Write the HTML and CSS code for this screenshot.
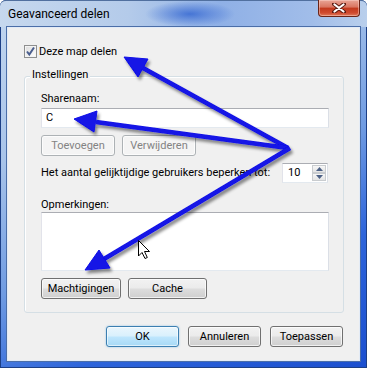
FILE: index.html
```html
<!DOCTYPE html>
<html lang="nl">
<head>
<meta charset="utf-8">
<title>Geavanceerd delen</title>
<link rel="stylesheet" href="styles.css">
</head>
<body>
<div class="window">
  <div class="titlebar">
    <span class="title">Geavanceerd delen</span>
    <span class="close"><svg width="14" height="10" viewBox="0 0 14 10"><path d="M2 1 L12 9 M12 1 L2 9" stroke="#5a1a10" stroke-width="4" stroke-linecap="round"/><path d="M2.5 1.5 L11.5 8.5 M11.5 1.5 L2.5 8.5" stroke="#fff" stroke-width="2.2" stroke-linecap="round"/></svg></span>
  </div>
  <div class="client">
    <div class="check-row">
      <span class="checkbox"><svg width="11" height="11" viewBox="0 0 11 11"><path d="M2 5.5 L4.3 8.5 L9 1.5" fill="none" stroke="#4a5e8e" stroke-width="2"/></svg></span>
      <span>Deze map delen</span>
    </div>
    <div class="group">
      <span class="legend">Instellingen</span>
      <span class="label first">Sharenaam:</span>
      <div class="textbox">C</div>
      <div class="btn-row">
        <button class="btn disabled w74">Toevoegen</button>
        <button class="btn disabled w74">Verwijderen</button>
      </div>
      <div class="limit-row">
        <span class="limit-text">Het aantal gelijktijdige gebruikers beperken tot:</span>
        <div class="spinner">
          <span class="spin-value">10</span>
          <span class="spin-buttons">
            <span class="spin-btn"><svg width="7" height="4" viewBox="0 0 7 4"><path d="M0 4 L3.5 0 L7 4 Z" fill="#4d6185"/></svg></span>
            <span class="spin-btn"><svg width="7" height="4" viewBox="0 0 7 4"><path d="M0 0 L3.5 4 L7 0 Z" fill="#4d6185"/></svg></span>
          </span>
        </div>
      </div>
      <span class="label second">Opmerkingen:</span>
      <div class="textarea"></div>
      <div class="btn-row">
        <button class="btn w80">Machtigingen</button>
        <button class="btn w79">Cache</button>
      </div>
    </div>
    <div class="footer">
      <button class="btn default w73">OK</button>
      <button class="btn w73">Annuleren</button>
      <button class="btn w73">Toepassen</button>
    </div>
  </div>
</div>
<svg class="overlay" width="367" height="368" viewBox="0 0 367 368">
  <defs>
    <filter id="sh" x="-20%" y="-20%" width="140%" height="140%">
      <feDropShadow dx="2" dy="3" stdDeviation="1.6" flood-color="#000" flood-opacity="0.45"/>
    </filter>
  </defs>
  <g filter="url(#sh)" fill="#1212e6" stroke="#1212e6">
    <path d="M288 148 L143 68" stroke-width="4.5" fill="none"/>
    <polygon points="124,57 148,59 138,77" stroke-width="1"/>
    <path d="M288 148 L96 122" stroke-width="4.5" fill="none"/>
    <polygon points="74,119 97,111 94,132" stroke-width="1"/>
    <path d="M290 148 L104 259" stroke-width="4.5" fill="none"/>
    <polygon points="85,270 110,268 99,250" stroke-width="1"/>
  </g>
  <path d="M138.5 240.5 L138.5 256 L142 252.5 L145 258.5 L147.3 257.5 L144.5 251.5 L149.5 251.5 Z" fill="#fff" stroke="#000" stroke-width="1" stroke-linejoin="round"/>
</svg>
</body>
</html>
```
FILE: styles.css
```css
* { box-sizing: border-box; }
html, body { margin: 0; padding: 0; }
body {
  width: 367px;
  height: 368px;
  overflow: hidden;
  position: relative;
  font-family: Roboto, "Liberation Sans", sans-serif;
  font-size: 11px;
  line-height: 15px;
  color: #000;
  background: #fff;
}
.window {
  width: 367px;
  height: 368px;
  display: flex;
  flex-direction: column;
  border-radius: 6px 6px 0 0;
  background: linear-gradient(155deg, #c3d7ef 0%, #a8c4ea 30%, #6f9be2 55%, #2d64da 75%, #1b4fcf 100%);
  box-shadow: inset 0 0 0 1px #1c3f86;
}
.titlebar {
  height: 27px;
  display: flex;
  justify-content: space-between;
  align-items: flex-start;
  padding-left: 8px;
  border-radius: 6px 6px 0 0;
  border-top: 1px solid #51709f;
  background:
    radial-gradient(ellipse 45px 13px at 190px 13px, rgba(55, 105, 210, 0.85), rgba(55, 105, 210, 0)),
    linear-gradient(to right, #c6d8ee 0%, #b4cbea 35%, #8fb0e6 60%, #a1bde9 85%, #b9cfec 100%);
}
.title {
  padding-top: 6px;
  font-size: 12px;
  color: #000;
}
.close {
  width: 42px;
  height: 17px;
  margin-top: -1px;
  margin-right: 7px;
  display: flex;
  align-items: center;
  justify-content: center;
  border: 1px solid #6a2418;
  border-top: none;
  border-radius: 0 0 4px 4px;
  background: linear-gradient(#e9a596 0%, #d9745f 45%, #c2391d 50%, #cf4a2f 80%, #e07a5b 100%);
  box-shadow: inset 0 0 0 1px rgba(255, 220, 210, 0.45);
}
.client {
  flex: 1;
  margin: 0 7px 7px;
  border: 1px solid #e3ebf6;
  outline: 1px solid #4b6ea8;
  background: #f0f0f0;
  display: flex;
  flex-direction: column;
  padding: 17px 15px 13px 16px;
}
.check-row {
  display: flex;
  align-items: center;
  gap: 2px;
  height: 13px;
}
.checkbox {
  width: 13px;
  height: 13px;
  border: 1px solid #8e8f8f;
  background: linear-gradient(135deg, #dcdcdc, #ffffff);
  display: flex;
  align-items: center;
  justify-content: center;
  box-shadow: inset 0 0 0 1px #f4f4f4;
}
.group {
  margin-top: 18px;
  border: 1px solid #d5dfe5;
  border-radius: 3px;
  box-shadow: inset 1px 1px 0 #fff;
  padding: 0 14px 13px 16px;
  display: flex;
  flex-direction: column;
}
.legend {
  align-self: flex-start;
  margin: -10px 0 0 -11px;
  padding: 0 2px;
  background: #f0f0f0;
}
.label.first { margin-top: 9px; }
.label.second { margin-top: 15px; line-height: 14px; }
.textbox {
  margin-top: 2px;
  height: 20px;
  background: #fff;
  border: 1px solid #abadb3;
  border-color: #abadb3 #dbdfe6 #e3e9ef #e2e3ea;
  padding: 1px 4px;
  line-height: 16px;
}
.btn-row {
  display: flex;
  gap: 7px;
  margin-top: 7px;
}
.btn {
  height: 21px;
  padding: 0;
  font: inherit;
  color: #000;
  border: 1px solid #707070;
  border-radius: 3px;
  background: linear-gradient(#f2f2f2 0%, #ebebeb 48%, #dddddd 52%, #cfcfcf 100%);
  box-shadow: inset 0 0 0 1px rgba(255, 255, 255, 0.7);
  display: flex;
  align-items: center;
  justify-content: center;
}
.btn.disabled {
  color: #838383;
  border-color: #adb2b5;
  background: #f4f4f4;
}
.btn.default {
  border-color: #3c7fb1;
  background: linear-gradient(#eaf6fd 0%, #d9f0fc 48%, #bee6fd 52%, #a7d9f5 100%);
  box-shadow: inset 0 0 0 1px rgba(255, 255, 255, 0.6), 0 0 2px rgba(70, 160, 220, 0.6);
}
.w73 { width: 73px; }
.w74 { width: 74px; }
.w79 { width: 79px; }
.w80 { width: 80px; }
.limit-row {
  margin-top: 7px;
  height: 20px;
  display: flex;
  align-items: flex-start;
}
.limit-text { padding-top: 2px; white-space: nowrap; }
.spinner {
  margin-left: auto;
  margin-right: 1px;
  width: 46px;
  height: 20px;
  background: #fff;
  border: 1px solid #abadb3;
  border-color: #abadb3 #dbdfe6 #e3e9ef #e2e3ea;
  display: flex;
}
.spin-value {
  flex: 1;
  padding: 1px 0 0 5px;
  line-height: 16px;
}
.spin-buttons {
  width: 15px;
  display: flex;
  flex-direction: column;
  padding: 1px 1px 1px 0;
}
.spin-btn {
  flex: 1;
  display: flex;
  align-items: center;
  justify-content: center;
  border: 1px solid #c9cccf;
  background: linear-gradient(#f7f7f7, #e4e4e4);
}
.textarea {
  height: 59px;
  background: #fff;
  border: 1px solid #abadb3;
  border-color: #abadb3 #dbdfe6 #e3e9ef #e2e3ea;
}
.footer {
  margin-top: 13px;
  padding-right: 1px;
  display: flex;
  justify-content: flex-end;
  gap: 9px;
}
.overlay {
  position: absolute;
  left: 0;
  top: 0;
  pointer-events: none;
}
```
